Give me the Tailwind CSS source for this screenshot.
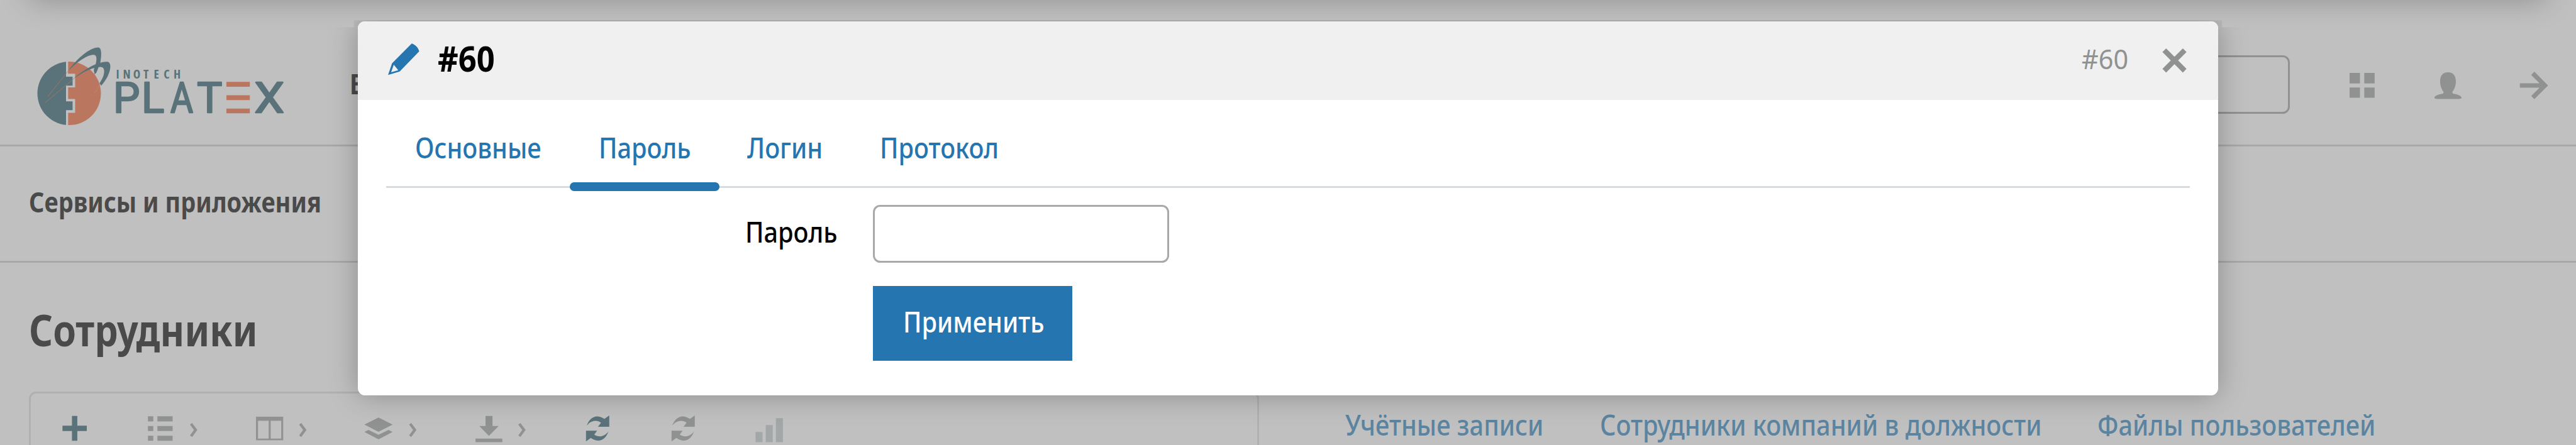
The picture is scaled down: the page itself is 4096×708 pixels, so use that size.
<!DOCTYPE html>
<html lang="ru" class="text-[45.5111px]">
<head>
<meta charset="utf-8">
<title>PLATEX</title>
<script src="https://cdn.jsdelivr.net/npm/@tailwindcss/browser@4"></script>
</head>
<body class="relative h-screen w-screen overflow-hidden bg-[#c0c0c0] font-['Noto_Sans',sans-serif] text-[0.98rem] leading-none text-[#4a4a4a]">

  <!-- Header -->
  <header class="flex h-[5.125rem] border-b-[3px] border-[#a8a8a8]">
    <svg class="ml-[1.09375rem] mt-[1.484375rem] h-[3.125rem] w-[9.21875rem] shrink-0" viewBox="70 95 590 200">
      <defs><clipPath id="disc"><circle cx="253" cy="340" r="213"/></clipPath></defs>
      <g transform="translate(70 95) scale(.33333)">
        <g clip-path="url(#disc)">
          <path fill="#5a7279" d="M0 100H232V228H276V288H232V393H276V452H232V600H0z"/>
          <path fill="#bb765f" d="M246 100H500V600H246V470H293V378H246V300H293V208H246z"/>
        </g>
        <path d="M246 190L112 358M288 238L92 402" stroke="#bb765f" stroke-width="3" fill="none"/>
        <g fill="#5a7279">
          <path d="M246 190C305 105 395 30 450 32C474 37 470 90 462 135L436 200L424 212L418 182C436 140 445 90 424 82C385 76 315 120 246 190z"/>
          <path d="M284 240C360 168 470 118 515 129C548 145 520 235 468 288L456 272C492 225 500 165 468 163C430 160 365 185 284 240z"/>
        </g>
        <path d="M452 290L424 338" stroke="#d09a86" stroke-width="3" stroke-dasharray="4 5"/>
      </g>
      <g transform="translate(240 140) scale(.33333)" fill="#5a7279">
        <text y="106" x="58 104 172 241 311 377 443" font-family="Open Sans" font-weight="700" font-size="82" style="font-stretch:75%">INOTECH</text>
        <g font-family="Roboto" font-size="284" stroke="#5a7279" stroke-width="10" stroke-linejoin="round">
          <text x="38" y="335">P</text>
          <text x="228" y="335">L</text>
          <text x="422" y="335" textLength="152" lengthAdjust="spacingAndGlyphs">A</text>
          <text x="601" y="335">T</text>
          <text x="986" y="335" textLength="200" lengthAdjust="spacingAndGlyphs">X</text>
        </g>
        <path fill="#bb765f" d="M798 128H955V160H798zM798 217H955V250H798zM798 307H955V339H798z"/>
      </g>
    </svg>
    <nav class="ml-[1.9rem] pt-[2.44rem]"><a class="inline-block origin-left scale-x-[0.86] font-bold">В</a></nav>
    <div class="ml-auto mt-[1.9375rem] h-[2.03rem] w-[20rem] rounded-[0.25rem] border-[3px] border-[#8f9291]"></div>
    <svg class="h-[5rem] w-[10rem] shrink-0" viewBox="1280 0 160 80" fill="#8f9291">
      <path d="M1313.4 40.8h5.8v5.9h-5.8zM1321.6 40.8h5.8v5.9h-5.8zM1313.4 49h5.8v5.7h-5.8zM1321.6 49h5.8v5.7h-5.8z"/>
      <path d="M1368.4 40.4c3 0 4.4 2 4.4 5 0 2.600-.8 4.600-2 6l.3.9c2.900.6 4.900 1.300 4.900 2.400q0 .7-1.800.7h-11.600q-1.800 0-1.800-.7c0-1.100 2-1.800 4.900-2.400l.3-.9c-1.200-1.400-2-3.400-2-6 0-3 1.400-5 4.400-5z"/>
      <path d="M1408.600 47.800h13.500M1415.800 41l6.800 6.800-6.800 6.800" fill="none" stroke="#8f9291" stroke-width="2.500"/>
    </svg>
  </header>

  <!-- Section bar -->
  <div class="h-[4.0625rem] border-b-[3px] border-[#a8a8a8] pl-[1rem] pt-[1.4375rem]">
    <span class="inline-block origin-left scale-x-[0.851] whitespace-nowrap font-bold">Сервисы и приложения</span>
  </div>

  <!-- Page title -->
  <h1 class="h-[4.5rem] pl-[1rem] pt-[1.575rem] text-[1.53rem] font-bold"><span class="inline-block origin-left scale-x-[0.85]">Сотрудники</span></h1>

  <!-- Toolbar and related links -->
  <div class="flex">
    <div class="ml-[1rem] flex h-[1.86rem] w-[43rem] rounded-t-[0.25rem] border-[3px] border-b-0 border-[#b0b0b0] pt-[0.48rem]">
      <svg class="h-[1.3125rem] w-[3.0625rem]" viewBox="17 228 49 21" fill="#5a7279"><path d="M40 232.800h3v5.500h5.300v3h-5.300v5.400h-3v-5.400h-5.300v-3h5.300z"/></svg>
      <svg class="h-[1.3125rem] w-[3.8125rem]" viewBox="66 228 61 21" fill="#8f9291"><path d="M82.600 233h3v2.900h-3zM87.900 233h8.500v2.900h-8.500zM82.600 238.500h3v2.800h-3zM87.900 238.500h8.500v2.800h-8.500zM82.600 243.900h3v2.800h-3zM87.900 243.900h8.500v2.800h-8.500z"/><path d="M106.700 237.200l2.600 3.500-2.600 3.500" fill="none" stroke="#8f9291" stroke-width="1.500"/></svg>
      <svg class="h-[1.3125rem] w-[3.8125rem]" viewBox="127 228 61 21"><path fill="#8f9291" fill-rule="evenodd" d="M143.200 233.300h15.200v13.200h-15.200zM144.300 235.600v9.900h6v-9.900zM151.400 235.600v9.900h5.900v-9.900z"/><path d="M167.900 237.200l2.600 3.500-2.600 3.500" fill="none" stroke="#8f9291" stroke-width="1.500"/></svg>
      <svg class="h-[1.3125rem] w-[3.8125rem]" viewBox="188 228 61 21" fill="#8f9291"><path d="M211.500 233.700l7.900 4-7.900 4-7.900-4zM203.600 241.800l2.300-1.100 5.600 2.700 5.600-2.700 2.300 1.100-7.900 4.100z"/><path d="M229.200 237.200l2.600 3.500-2.600 3.500" fill="none" stroke="#8f9291" stroke-width="1.500"/></svg>
      <svg class="h-[1.3125rem] w-[3.8125rem]" viewBox="249 228 61 21" fill="#8f9291"><path d="M271.500 232.800h3.900v5.700h3.500l-5.500 5.500-5.400-5.500h3.500zM265.900 245.500h15v2h-15z"/><path d="M290.400 237.200l2.600 3.500-2.600 3.500" fill="none" stroke="#8f9291" stroke-width="1.500"/></svg>
      <svg class="h-[1.3125rem] w-[3rem]" viewBox="310 228 48 21" fill="#5a7279"><path id="sync" d="M327.900 238.300c1-3 3.200-5.300 6-5.200 1.700.1 2.900.8 3.900 1.400l2.700-1.900v6.300h-6.300l1.700-2.300c-2.600-1.900-5.900-1.100-8 1.700zM340.100 241.500c-1.200 3.100-3.200 5.200-6 5.100-1.600-.1-2.800-.8-3.900-1.500l-2.700 2v-6h6.200l-1.600 2.200c2.600 1.800 5.800 1 8-1.800z"/></svg>
      <svg class="h-[1.3125rem] w-[3rem]" viewBox="310 228 48 21" fill="#8f9291"><use href="#sync"/></svg>
      <svg class="h-[1.3125rem] w-[3rem]" viewBox="406 228 48 21" fill="#a3a7a8"><path d="M422.300 241.800h3.900v5.700h-3.900zM428 237.900h3.900v9.600h-3.900zM433.700 234.100h3.900v13.400h-3.900z"/></svg>
    </div>
    <nav class="flex pt-[0.69rem] font-medium text-[#5b84a0]">
      <a class="ml-[3rem] w-[8.9rem] whitespace-nowrap"><span class="inline-block origin-left scale-x-[0.892]">Учётные записи</span></a>
      <a class="w-[17.370rem] whitespace-nowrap"><span class="inline-block origin-left scale-x-[0.892]">Сотрудники компаний в должности</span></a>
      <a class="w-[12rem] whitespace-nowrap"><span class="inline-block origin-left scale-x-[0.892]">Файлы пользователей</span></a>
    </nav>
  </div>

  <!-- Shadow of the panel above the viewport -->
  <div class="absolute left-[1rem] right-[1rem] top-[-4rem] h-[4rem] rounded-[0.25rem] shadow-[0_0_1rem_rgba(0,0,0,0.26)]"></div>

  <!-- Dialog -->
  <section class="absolute left-[12.5rem] top-[0.75rem] h-[13.0625rem] w-[65rem] rounded-[0.25rem] bg-white text-black shadow-[0_0_1rem_rgba(0,0,0,0.28)] [clip-path:polygon(-6px_-2px,calc(100%_+_6px)_-2px,calc(100%_+_6px)_9px,calc(100%_+_90px)_9px,calc(100%_+_90px)_calc(100%_+_90px),-90px_calc(100%_+_90px),-90px_9px,-6px_9px)]">
    <div class="flex h-[2.75rem] rounded-t-[0.25rem] bg-[#f0f0f0]">
      <svg class="h-[2.75rem] w-[2.75rem]" viewBox="200 12 44 44"><path fill="#2576b0" fill-rule="evenodd" d="M230.100 24.400c2.200.7 3.600 2.200 4.200 4.400l-10.900 11.200-6.500 2 2.200-6.500zM220.100 36.300l-1.500 4.200 4-1.200z"/></svg>
      <span class="ml-[0.04rem] mt-[0.675rem] inline-block h-[1.225rem] origin-left scale-x-[0.91] text-[1.225rem] font-bold">#60</span>
      <span class="ml-auto mt-[0.804rem] inline-block h-[1rem] w-[1.700rem] origin-left scale-x-[0.93] text-[#8f9291]">#60</span>
      <svg class="ml-[0.07rem] h-[2.75rem] w-[3rem]" viewBox="1192 12 48 44"><path d="M1209.700 28.100l11.400 11.500M1221.100 28.100l-11.400 11.500" stroke="#8f9291" stroke-width="2.900"/></svg>
    </div>
    <nav class="mx-[1rem] flex h-[3.0625rem] border-b-[3px] border-[#d8dcde] font-medium text-[#2576b0]">
      <a class="w-[6.400rem] pl-[1rem] pt-[1.190rem]"><span class="inline-block origin-left scale-x-[0.892]">Основные</span></a>
      <a class="relative w-[5.230rem] pl-[1.01rem] pt-[1.190rem]"><span class="inline-block origin-left scale-x-[0.892]">Пароль</span><i class="absolute inset-x-0 top-[2.875rem] h-[0.3125rem] rounded-[0.15rem] bg-[#2576b0]"></i></a>
      <a class="w-[4.570rem] pl-[0.98rem] pt-[1.190rem]"><span class="inline-block origin-left scale-x-[0.892]">Логин</span></a>
      <a class="pl-[1.03rem] pt-[1.190rem]"><span class="inline-block origin-left scale-x-[0.892]">Протокол</span></a>
    </nav>
    <form class="grid grid-cols-[4.460rem_auto] pl-[13.540rem] font-medium">
      <label class="pt-[1.0625rem]"><span class="inline-block origin-left scale-x-[0.892]">Пароль</span></label>
      <div class="mt-[0.600rem] h-[2.03rem] w-[10.340rem] rounded-[0.25rem] border-[3px] border-[#a9a9a9]"></div>
      <button type="button" class="col-start-2 mt-[0.81rem] h-[2.61rem] w-[6.970rem] bg-[#2576b0] pl-[1.050rem] text-left leading-none text-white"><span class="inline-block origin-left scale-x-[0.892] pb-[0.1rem]">Применить</span></button>
    </form>
  </section>
</body>
</html>
